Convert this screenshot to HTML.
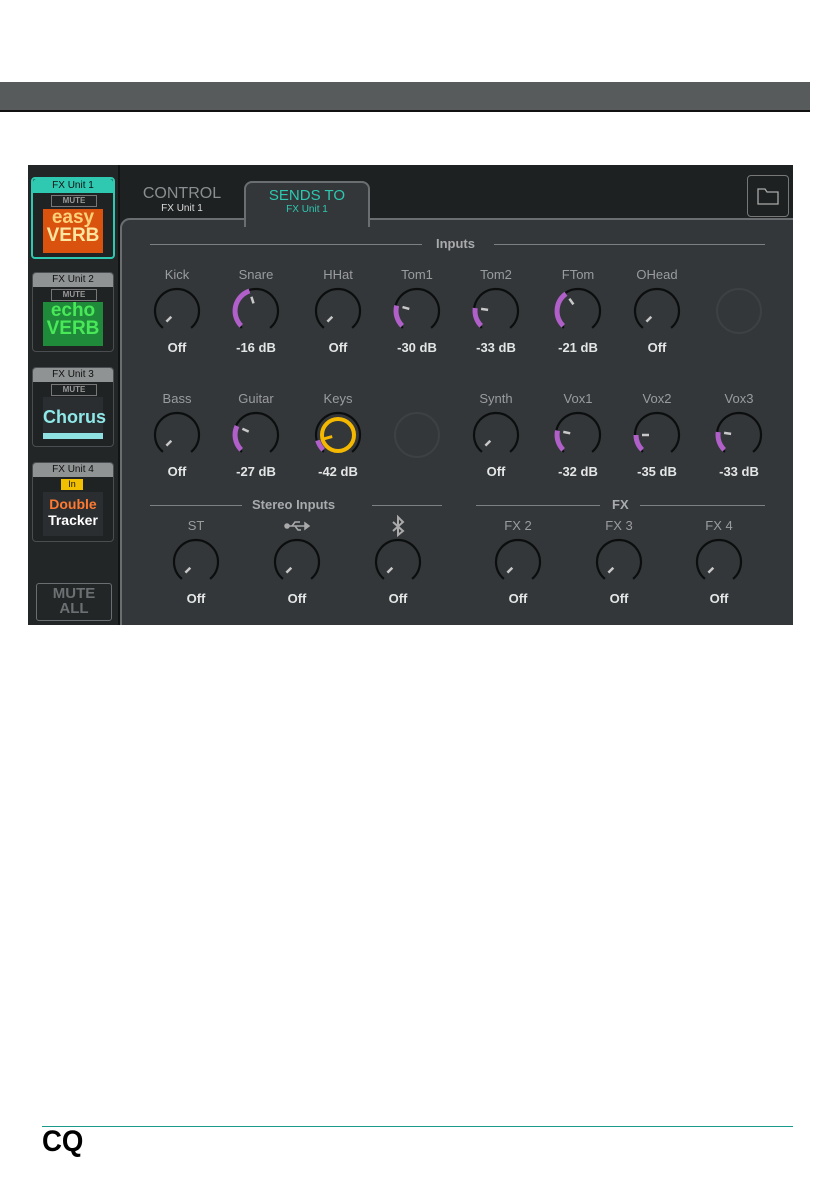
<!DOCTYPE html>
<html><head><meta charset="utf-8"><style>
body{margin:0;width:839px;height:1191px;background:#fff;position:relative;overflow:hidden;font-family:"Liberation Sans",sans-serif}
.a{position:absolute}
.bar{left:0;top:82px;width:810px;height:28px;background:#575b5b;border-bottom:2px solid #111}
.scr{left:28px;top:165px;width:765px;height:460px;background:#1d2121;overflow:hidden}
.body{left:92px;top:53px;width:690px;height:420px;background:#33373a;border:2px solid #6a6e70;border-radius:10px 0 0 0}
.side{left:0;top:0;width:90px;height:460px;background:#222626;border-right:2px solid #121414}
.unit{left:4px;width:80px;height:78px;border:1px solid #4a4e50;border-radius:4px;background:#1f2323}
.uh{height:14px;background:#8f9393;color:#111;font-size:10px;text-align:center;line-height:14px;border-radius:3px 3px 0 0}
.mute{left:18px;top:16px;width:44px;height:10px;border:1px solid #777;color:#999;font-size:8px;font-weight:bold;text-align:center;line-height:10px}
.logo{left:10px;top:29px;width:60px;height:44px;text-align:center;font-weight:bold;line-height:18px}
.lbl{color:#9a9c9e;font-size:13px;text-align:center;width:70px}
.val{color:#e4e6e6;font-size:13px;font-weight:bold;text-align:center;width:70px}
.sec{color:#a8aaac;font-size:13px;font-weight:bold}
.ln{height:1px;background:#7c8082}
</style></head><body>
<div class="a bar"></div>
<div class="a scr">
 <div class="a side">
  <div class="a unit" style="top:12px;border:2px solid #2fc8b0;left:3px"><div class="uh" style="background:#2fc8b0">FX Unit 1</div><div class="a mute">MUTE</div><div class="a logo" style="background:#d9520e;color:#ffd27a;font-size:19px;top:30px">easy<br><span style="color:#ffe6a0">VERB</span></div></div>
  <div class="a unit" style="top:107px"><div class="uh">FX Unit 2</div><div class="a mute">MUTE</div><div class="a logo" style="background:#1f8a3a;color:#48e858;font-size:19px">echo<br>VERB</div></div>
  <div class="a unit" style="top:202px"><div class="uh">FX Unit 3</div><div class="a mute">MUTE</div><div class="a logo" style="background:#2a2e30;color:#8fe8e8;font-size:18px;line-height:40px;border-bottom:6px solid #8fe0e0;height:36px">Chorus</div></div>
  <div class="a unit" style="top:297px"><div class="uh">FX Unit 4</div><div class="a" style="left:28px;top:16px;width:22px;height:11px;background:#f2c000;color:#111;font-size:9px;text-align:center;line-height:11px">In</div><div class="a logo" style="background:#2a2e30;color:#fff;font-size:14px;line-height:16px;padding-top:4px;height:40px"><span style="color:#ff7a30">Double</span><br>Tracker</div></div>
  <div class="a" style="left:8px;top:418px;width:74px;height:34px;border:1px solid #6a6e70;border-radius:3px;color:#6c7072;font-weight:bold;font-size:15px;text-align:center;line-height:15px;padding-top:2px">MUTE<br>ALL</div>
 </div>
 <div class="a body"></div>
 <div class="a" style="left:106px;top:20px;width:96px;text-align:center;color:#8a8e90;font-size:16px">CONTROL<div style="font-size:10px;color:#ddd">FX Unit 1</div></div>
 <div class="a" style="left:216px;top:16px;width:122px;height:40px;border:2px solid #6a6e70;border-bottom:none;border-radius:8px 8px 0 0;background:#33373a;text-align:center;color:#2ec8b0;font-size:15px;padding-top:4px">SENDS TO<div style="font-size:10px">FX Unit 1</div></div>
 <div class="a" style="left:719px;top:10px;width:40px;height:40px;border:1px solid #777;border-radius:4px"><svg width="40" height="40"><path d="M10 13h7l2 3h11v12H10z" fill="none" stroke="#aaa" stroke-width="1.3"/></svg></div>
</div>
<div class="a ln" style="left:150px;top:244px;width:272px"></div><div class="a ln" style="left:494px;top:244px;width:271px"></div>
<div class="a sec" style="left:436px;top:236px">Inputs</div>
<div class="a ln" style="left:150px;top:505px;width:92px"></div><div class="a ln" style="left:372px;top:505px;width:70px"></div>
<div class="a sec" style="left:252px;top:497px">Stereo Inputs</div>
<div class="a ln" style="left:476px;top:505px;width:124px"></div><div class="a ln" style="left:640px;top:505px;width:125px"></div>
<div class="a sec" style="left:612px;top:497px">FX</div>
<div class="a" style="left:42px;top:1126px;width:751px;height:1px;background:#1a9a8a"></div>
<div class="a" style="left:42px;top:1125px;font-size:30px;font-weight:bold;transform:scaleX(.92);transform-origin:left">CQ</div>
<svg id="k" class="a" style="left:0;top:0" width="839" height="1191"></svg>
<div id="t"></div>
<script>
var K=[
[177,311,'Kick','Off',null],[256,311,'Snare','-16 dB',252],[338,311,'HHat','Off',null],[417,311,'Tom1','-30 dB',195],[496,311,'Tom2','-33 dB',188],[578,311,'FTom','-21 dB',235],[657,311,'OHead','Off',null],[739,311,'','',-1],
[177,435,'Bass','Off',null],[256,435,'Guitar','-27 dB',205],[338,435,'Keys','-42 dB',165,1],[417,435,'','',-1],[496,435,'Synth','Off',null],[578,435,'Vox1','-32 dB',192],[657,435,'Vox2','-35 dB',180],[739,435,'Vox3','-33 dB',188],
[196,562,'ST','Off',null],[297,562,'usb','Off',null],[398,562,'bt','Off',null],[518,562,'FX 2','Off',null],[619,562,'FX 3','Off',null],[719,562,'FX 4','Off',null]];
function P(cx,cy,r,a){a=a*Math.PI/180;return (cx+r*Math.cos(a)).toFixed(1)+' '+(cy+r*Math.sin(a)).toFixed(1)}
var s='',t='';
K.forEach(function(k){var x=k[0],y=k[1],r=22;
if(k[4]===-1){s+='<circle cx="'+x+'" cy="'+y+'" r="'+r+'" fill="none" stroke="#3d4143" stroke-width="2"/>';return;}
s+='<path d="M'+P(x,y,r,130)+' A'+r+' '+r+' 0 1 1 '+P(x,y,r,50)+'" fill="none" stroke="#0c0e0e" stroke-width="2.2"/>';
var a=k[4]==null?135:k[4];
if(k[4]!=null){s+='<path d="M'+P(x,y,r-1,135)+' A'+(r-1)+' '+(r-1)+' 0 0 1 '+P(x,y,r-1,a)+'" fill="none" stroke="#b060c8" stroke-width="5"/>';}
if(k[5]){s+='<circle cx="'+x+'" cy="'+y+'" r="16" fill="none" stroke="#f5b800" stroke-width="4"/>';s+='<line x1="'+P(x,y,6,a).replace(' ','" y1="')+'" x2="'+P(x,y,15,a).replace(' ','" y2="')+'" stroke="#f5b800" stroke-width="3"/>';}
else s+='<line x1="'+P(x,y,8,a).replace(' ','" y1="')+'" x2="'+P(x,y,15,a).replace(' ','" y2="')+'" stroke="#c8c8c8" stroke-width="2.5"/>';
var ly=y-43;
if(k[2]=='usb'){s+='<g stroke="#aaa" fill="#aaa" stroke-width="1.5"><circle cx="'+(x-10)+'" cy="'+(ly+7)+'" r="2"/><line x1="'+(x-10)+'" y1="'+(ly+7)+'" x2="'+(x+8)+'" y2="'+(ly+7)+'"/><polyline fill="none" points="'+(x-5)+','+(ly+7)+' '+(x-2)+','+(ly+3)+' '+(x+3)+','+(ly+3)+'"/><polyline fill="none" points="'+(x-2)+','+(ly+7)+' '+(x+1)+','+(ly+11)+' '+(x+4)+','+(ly+11)+'"/><path d="M'+(x+8)+' '+(ly+4)+'l4 3-4 3z"/></g>';}
else if(k[2]=='bt'){s+='<path d="M'+(x-5)+' '+(ly+3)+'L'+(x+5)+' '+(ly+12)+'L'+x+' '+(ly+16)+'V'+(ly-2)+'L'+(x+5)+' '+(ly+3)+'L'+(x-5)+' '+(ly+12)+'" fill="none" stroke="#aaa" stroke-width="2"/>';}
else t+='<div class="a lbl" style="left:'+(x-35)+'px;top:'+(y-44)+'px">'+k[2]+'</div>';
t+='<div class="a val" style="left:'+(x-35)+'px;top:'+(y+29)+'px">'+k[3]+'</div>';
});
document.getElementById('k').innerHTML=s;document.getElementById('t').innerHTML=t;
</script>
</body></html>
